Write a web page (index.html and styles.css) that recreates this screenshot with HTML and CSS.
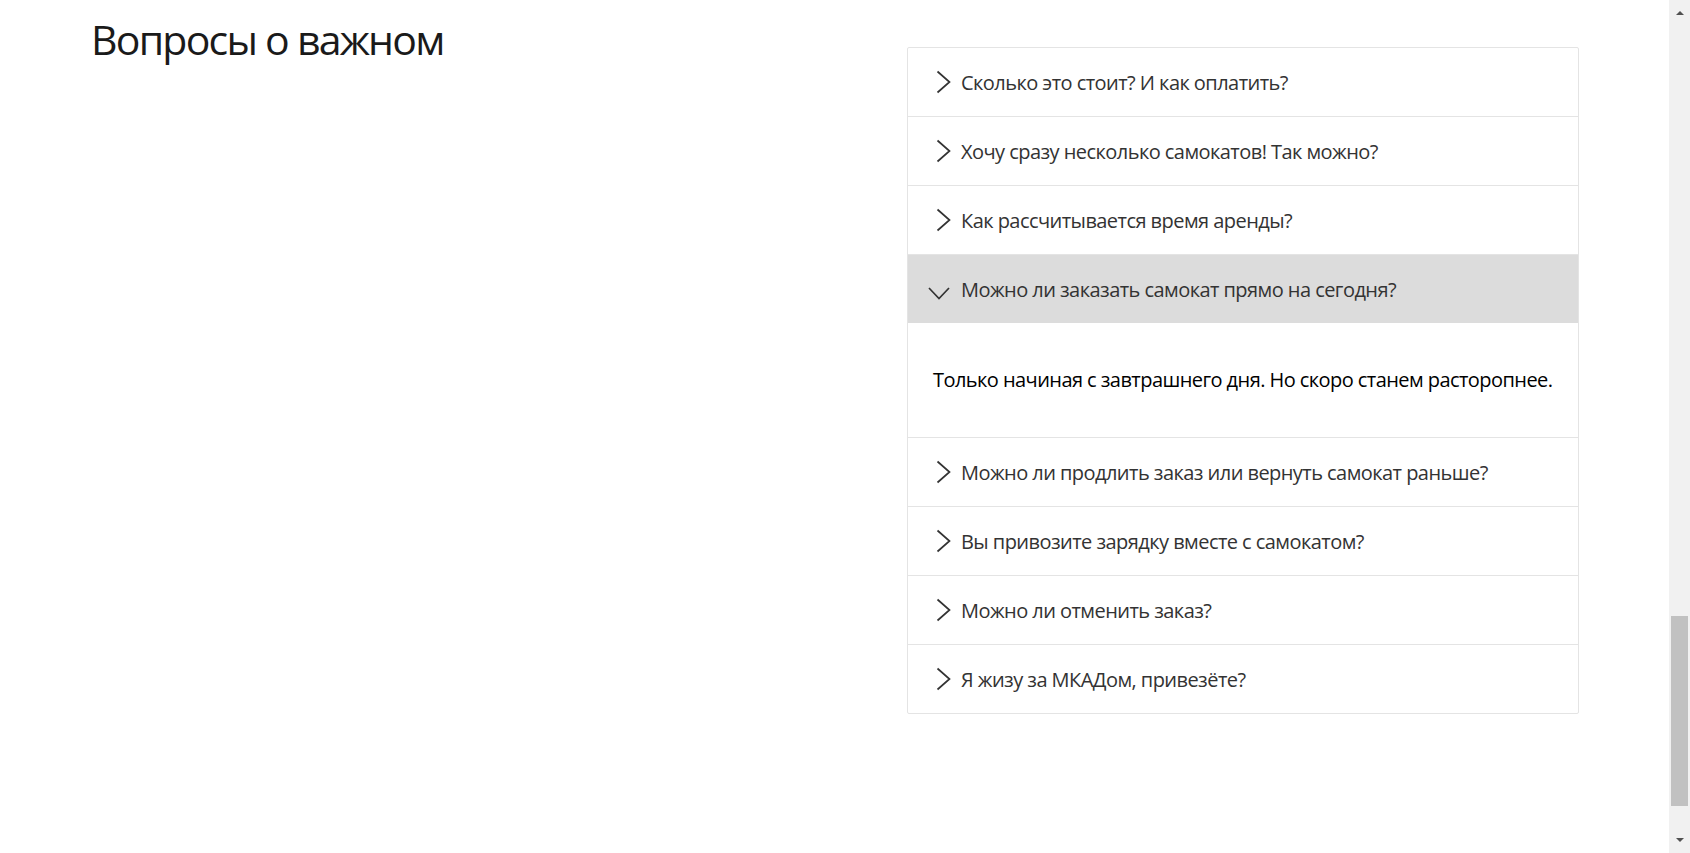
FILE: index.html
```html
<!DOCTYPE html>
<html lang="ru">
<head>
<meta charset="utf-8">
<title>Вопросы о важном</title>
<link rel="stylesheet" href="styles.css">
</head>
<body>
<div class="page">
  <section class="faq">
    <div class="faq-title-col">
      <h2 class="faq-title">Вопросы о важном</h2>
    </div>
    <div class="faq-list">
      <div class="faq-item">
        <div class="faq-head">
          <svg class="chev" width="24" height="24" viewBox="0 0 24 24"><path d="M5.5 1.5 L17.5 12 L5.5 22.5"/></svg>
          <span class="faq-q">Сколько это стоит? И как оплатить?</span>
        </div>
      </div>
      <div class="faq-item">
        <div class="faq-head">
          <svg class="chev" width="24" height="24" viewBox="0 0 24 24"><path d="M5.5 1.5 L17.5 12 L5.5 22.5"/></svg>
          <span class="faq-q">Хочу сразу несколько самокатов! Так можно?</span>
        </div>
      </div>
      <div class="faq-item">
        <div class="faq-head">
          <svg class="chev" width="24" height="24" viewBox="0 0 24 24"><path d="M5.5 1.5 L17.5 12 L5.5 22.5"/></svg>
          <span class="faq-q">Как рассчитывается время аренды?</span>
        </div>
      </div>
      <div class="faq-item is-open">
        <div class="faq-head">
          <svg class="chev" width="24" height="24" viewBox="0 0 24 24"><path d="M-3 11 L7 21.5 L17 11"/></svg>
          <span class="faq-q">Можно ли заказать самокат прямо на сегодня?</span>
        </div>
        <div class="faq-answer">Только начиная с завтрашнего дня. Но скоро станем расторопнее.</div>
      </div>
      <div class="faq-item">
        <div class="faq-head">
          <svg class="chev" width="24" height="24" viewBox="0 0 24 24"><path d="M5.5 1.5 L17.5 12 L5.5 22.5"/></svg>
          <span class="faq-q">Можно ли продлить заказ или вернуть самокат раньше?</span>
        </div>
      </div>
      <div class="faq-item">
        <div class="faq-head">
          <svg class="chev" width="24" height="24" viewBox="0 0 24 24"><path d="M5.5 1.5 L17.5 12 L5.5 22.5"/></svg>
          <span class="faq-q">Вы привозите зарядку вместе с самокатом?</span>
        </div>
      </div>
      <div class="faq-item">
        <div class="faq-head">
          <svg class="chev" width="24" height="24" viewBox="0 0 24 24"><path d="M5.5 1.5 L17.5 12 L5.5 22.5"/></svg>
          <span class="faq-q">Можно ли отменить заказ?</span>
        </div>
      </div>
      <div class="faq-item">
        <div class="faq-head">
          <svg class="chev" width="24" height="24" viewBox="0 0 24 24"><path d="M5.5 1.5 L17.5 12 L5.5 22.5"/></svg>
          <span class="faq-q">Я жизу за МКАДом, привезёте?</span>
        </div>
      </div>
    </div>
  </section>
</div>
<div class="scrollbar">
  <div class="sb-arrow sb-up"></div>
  <div class="sb-track"><div class="sb-thumb"></div></div>
  <div class="sb-arrow sb-down"></div>
</div>
</body>
</html>
```
FILE: styles.css
```css
html, body {
  margin: 0;
  padding: 0;
  height: 100%;
  overflow: hidden;
}
body {
  display: flex;
  background: #fff;
  font-family: "Open Sans", "Noto Sans", sans-serif;
  color: #333;
}
.page {
  flex: 1;
  min-width: 0;
}
.faq {
  display: flex;
  padding-left: 91px;
}
.faq-title-col {
  width: 816px;
  flex: none;
}
.faq-title {
  margin: 12px 0 0 0;
  font-size: 41px;
  font-weight: 400;
  line-height: 54px;
  letter-spacing: -1.75px;
  color: #1a1a1a;
}
.faq-list {
  width: 670px;
  margin-top: 47px;
  border: 1px solid #e4e4e4;
  border-radius: 2px;
}
.faq-item {
  border-bottom: 1px solid #e4e4e4;
}
.faq-item:last-child {
  border-bottom: none;
}
.faq-head {
  height: 68px;
  display: flex;
  align-items: center;
  padding-left: 24px;
  gap: 5px;
}
.is-open .faq-head {
  background: #dcdcdc;
}
.chev {
  flex: none;
  overflow: visible;
}
.chev path {
  fill: none;
  stroke: #333;
  stroke-width: 1.7;
}
.faq-q {
  font-size: 20px;
  color: #333;
  letter-spacing: -0.55px;
}
.faq-answer {
  padding: 44px 10px 45px 25px;
  line-height: 25px;
  font-size: 20px;
  color: #000;
  letter-spacing: -0.56px;
  white-space: nowrap;
}
.scrollbar {
  width: 21px;
  flex: none;
  background: #f1f1f1;
  display: flex;
  flex-direction: column;
  align-items: center;
}
.sb-arrow {
  width: 0;
  height: 0;
  border-left: 4px solid transparent;
  border-right: 4px solid transparent;
  margin: 11px 0;
}
.sb-up {
  border-bottom: 4px solid #505050;
}
.sb-down {
  border-top: 4px solid #505050;
}
.sb-track {
  flex: 1;
  width: 17px;
  display: flex;
  flex-direction: column;
  justify-content: flex-end;
  padding-bottom: 21px;
}
.sb-thumb {
  height: 190px;
  background: #c1c1c1;
}
```
